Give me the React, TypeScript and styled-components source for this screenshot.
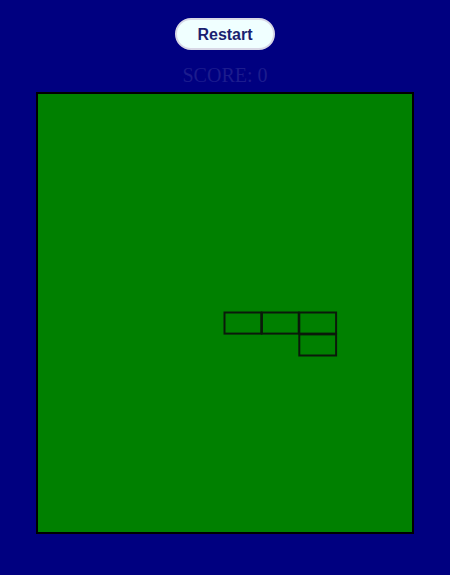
import React from "react";
import styled, { createGlobalStyle } from "styled-components";

const Global = createGlobalStyle`
  html, body { margin: 0; padding: 0; background: #000080; }
  body { font-family: "Liberation Serif", serif; }
`;

const Page = styled.div`
  display: flex;
  flex-direction: column;
  align-items: center;
  padding-top: 18px;
  min-height: 575px;
  box-sizing: border-box;
  background: #000080;
`;

const RestartButton = styled.button`
  width: 100px;
  height: 32px;
  border-radius: 16px;
  border: 2px solid #d8d8e6;
  background: #f0ffff;
  color: #1a1f70;
  font-family: "Liberation Sans", Arial, sans-serif;
  font-weight: bold;
  font-size: 16px;
  cursor: pointer;
  padding: 2px 0 0 0;
`;

const Score = styled.div`
  margin-top: 14px;
  font-family: "Liberation Serif", serif;
  font-size: 20px;
  line-height: 23px;
  color: #1c1c8e;
`;

const Board = styled.div`
  margin-top: 5px;
  width: 374px;
  height: 438px;
  border: 2px solid #000;
  background: #008000;
`;

const COLS = 10;
const ROWS = 20;
const W = 374;
const H = 438;
const cw = W / COLS;
const ch = H / ROWS;

const snake: [number, number][] = [
  [5, 10],
  [6, 10],
  [7, 10],
  [7, 11],
];

export default function App() {
  return (
    <>
      <Global />
      <Page>
        <RestartButton>Restart</RestartButton>
        <Score>SCORE: 0</Score>
        <Board>
          <svg width={W} height={H} viewBox={`0 0 ${W} ${H}`} style={{ display: "block" }}>
            {snake.map(([c, r], i) => (
              <rect
                key={i}
                x={c * cw - 0.5}
                y={r * ch - 0.5}
                width={cw - 0.6}
                height={ch - 0.8}
                fill="none"
                stroke="#0a1a0a"
                strokeWidth={2}
              />
            ))}
          </svg>
        </Board>
      </Page>
    </>
  );
}
